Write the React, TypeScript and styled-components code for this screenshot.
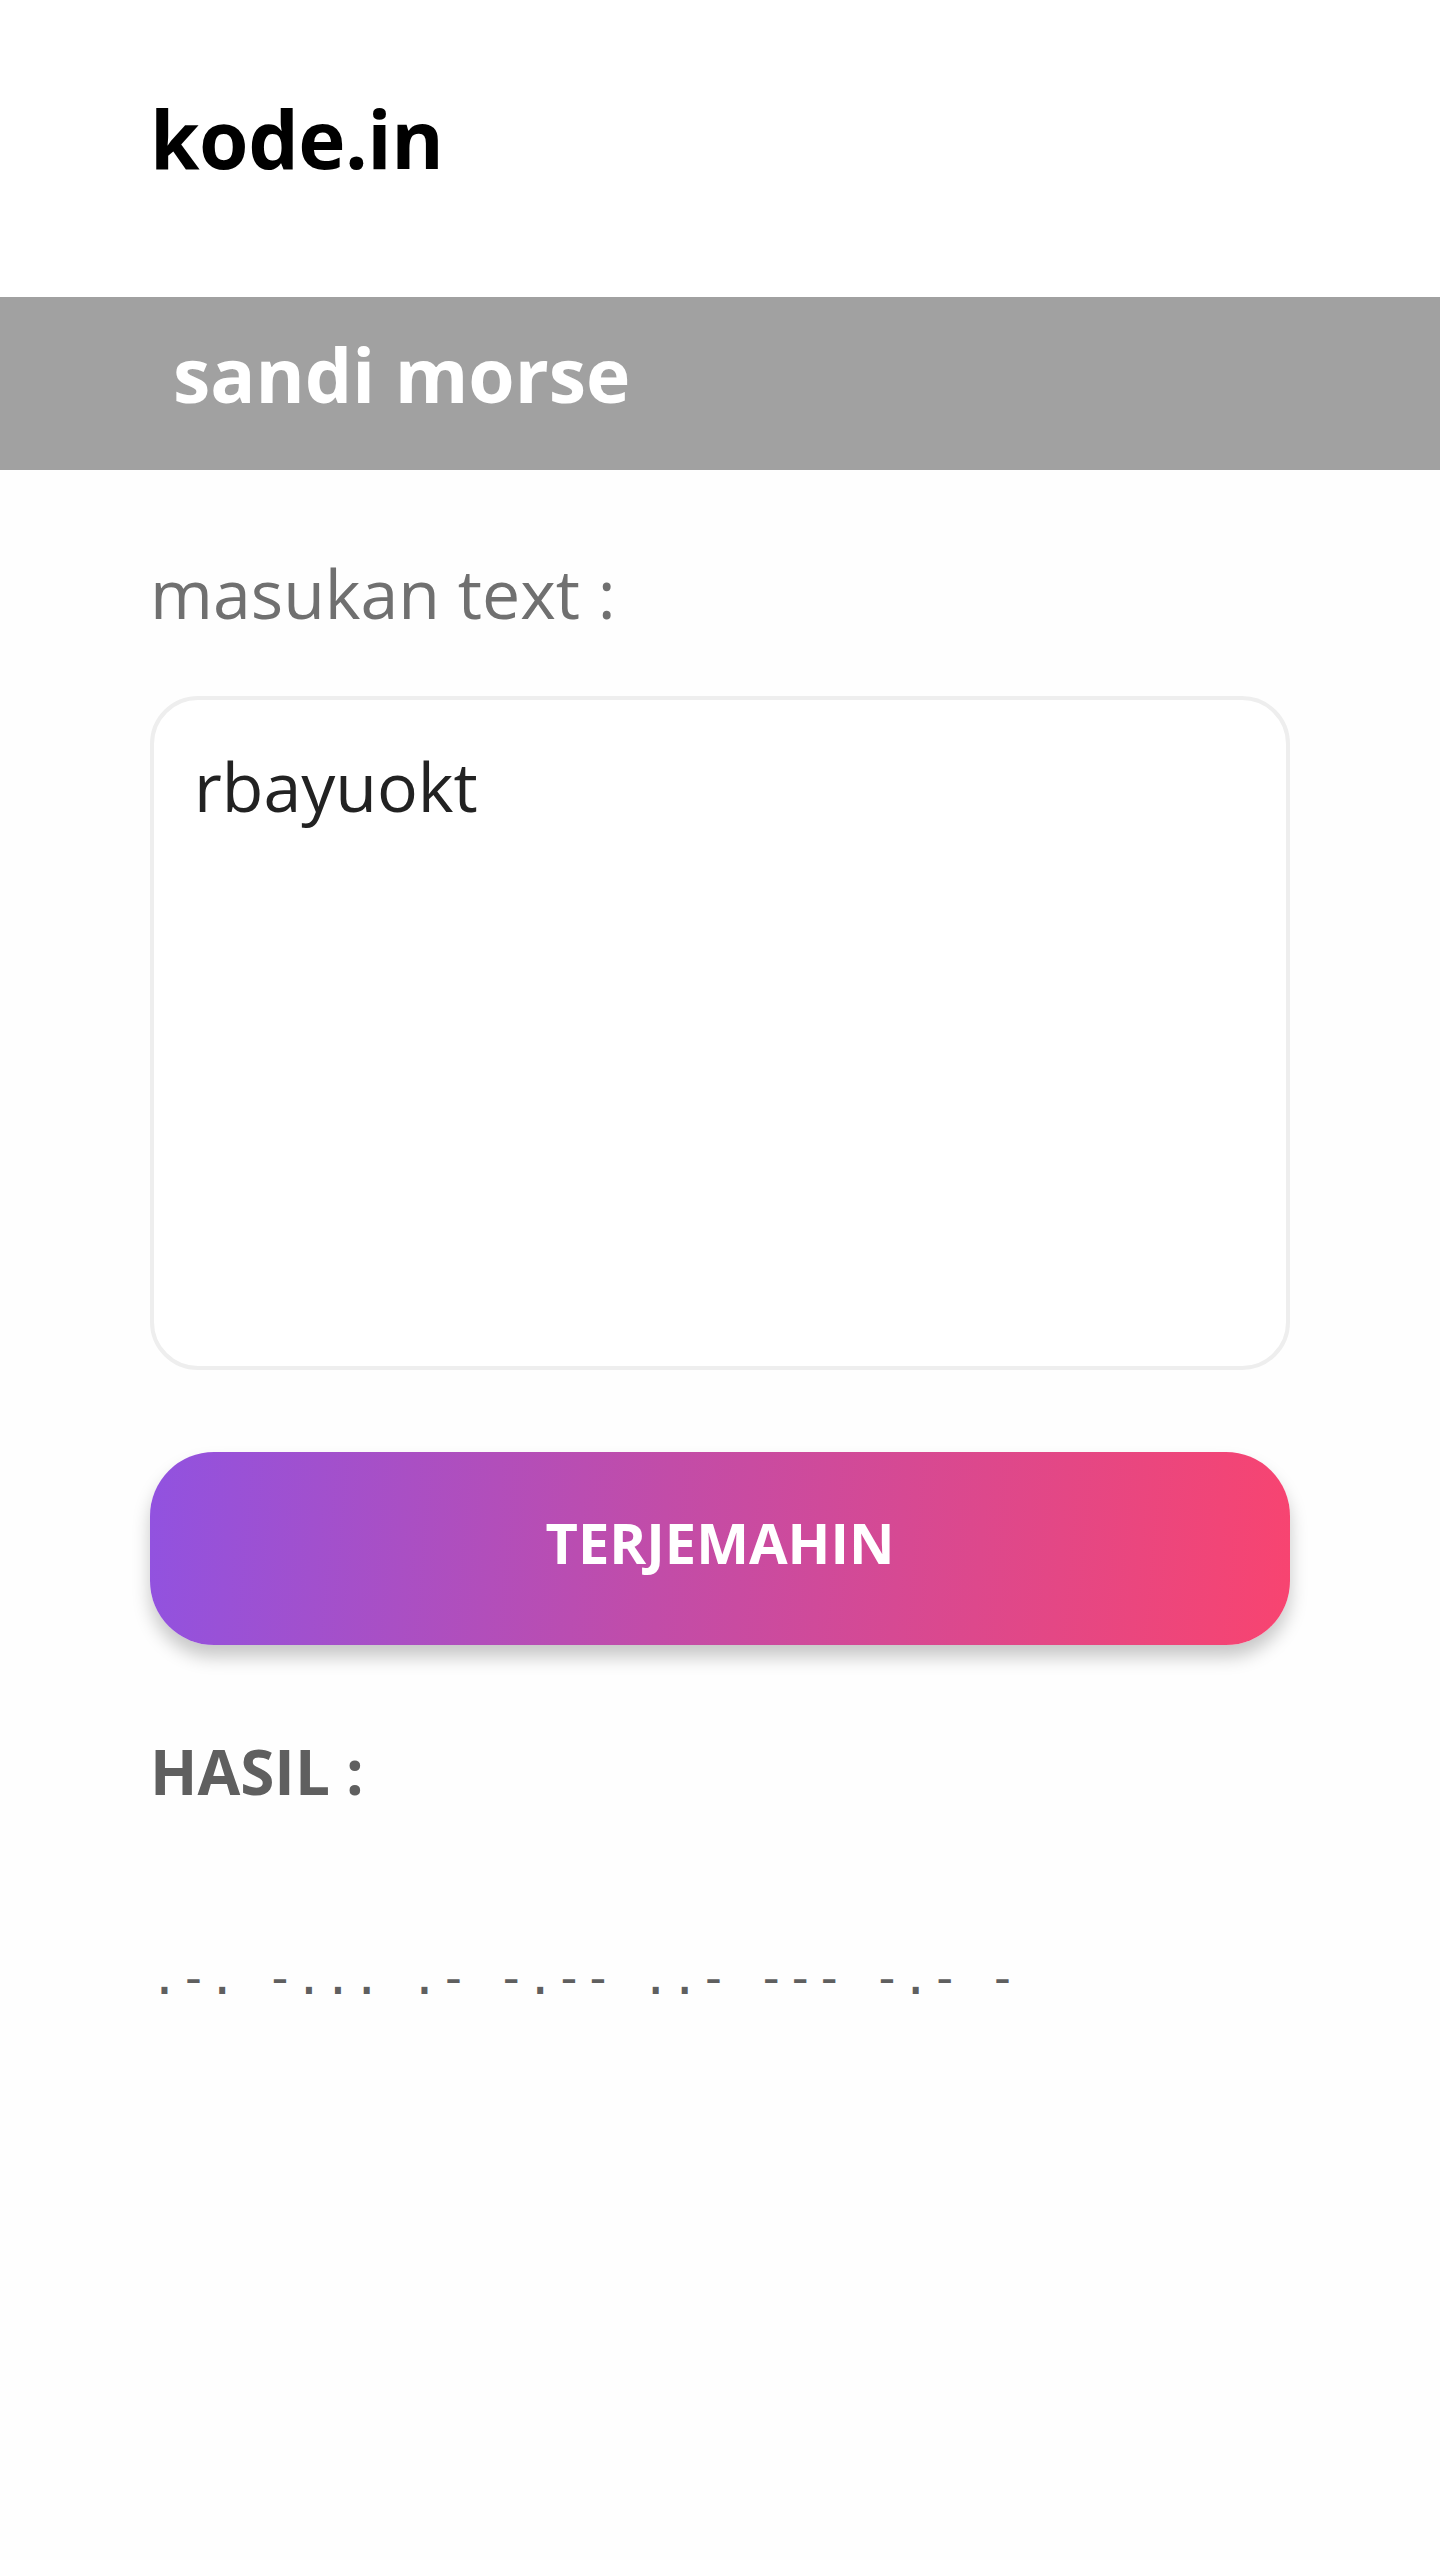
import { styled, createGlobalStyle } from "styled-components";

const GlobalStyle = createGlobalStyle`
  * {
    box-sizing: border-box;
  }
  body {
    margin: 0;
    background: #fefefe;
    font-family: 'Open Sans', 'Liberation Sans', sans-serif;
  }
`;

const Page = styled.div`
  display: flex;
  flex-direction: column;
  width: 100%;
  min-height: 2560px;
  background: #fefefe;
`;

const Header = styled.header`
  height: 297px;
  padding: 98px 150px 0;
  background: #ffffff;
`;

const Logo = styled.h1`
  margin: 0;
  font-size: 80px;
  line-height: 80px;
  font-weight: 700;
  color: #000000;
  letter-spacing: -0.5px;
`;

const Banner = styled.div`
  height: 173px;
  padding: 0 0 19px 173px;
  background: #a1a1a1;
  font-size: 75px;
  line-height: 154px;
  font-weight: 700;
  color: #ffffff;
`;

const Main = styled.main`
  display: flex;
  flex-direction: column;
  padding: 0 150px;
`;

const Label = styled.label`
  margin-top: 83px;
  font-size: 68px;
  line-height: 80px;
  font-weight: 400;
  color: #707070;
`;

const TextBox = styled.textarea`
  margin-top: 63px;
  width: 100%;
  height: 674px;
  padding: 38px 40px;
  border: 4px solid #eeeeee;
  border-radius: 48px;
  outline: 0;
  resize: none;
  background: #ffffff;
  font-family: 'Open Sans', 'Liberation Sans', sans-serif;
  font-size: 68px;
  line-height: 96px;
  color: #222222;
`;

const TranslateButton = styled.button`
  margin-top: 82px;
  width: 100%;
  height: 193px;
  padding: 0 0 14px;
  border: 0;
  border-radius: 64px;
  background: linear-gradient(95deg, #9152e0 0%, #c24ca8 45%, #f84470 100%);
  box-shadow: 0 12px 18px rgba(0, 0, 0, 0.22);
  font-family: 'Open Sans', 'Liberation Sans', sans-serif;
  font-size: 56px;
  font-weight: 700;
  color: #ffffff;
  text-transform: uppercase;
  cursor: pointer;
`;

const ResultTitle = styled.h2`
  margin: 86px 0 0;
  font-size: 62px;
  line-height: 80px;
  font-weight: 700;
  color: #5f5f5f;
`;

const MorseOutput = styled.p`
  margin: 134px 0 0;
  font-family: 'DejaVu Sans Mono', 'Liberation Mono', monospace;
  font-size: 48px;
  line-height: 64px;
  letter-spacing: 0;
  color: #5f5f5f;
  white-space: pre;
`;

const morse = ".-. -... .- -.-- ..- --- -.- -";

function App() {
  return (
    <Page>
      <GlobalStyle />
      <Header>
        <Logo>kode.in</Logo>
      </Header>
      <Banner>sandi morse</Banner>
      <Main>
        <Label htmlFor="teks">masukan text :</Label>
        <TextBox id="teks" defaultValue="rbayuokt" />
        <TranslateButton>Terjemahin</TranslateButton>
        <ResultTitle>HASIL :</ResultTitle>
        <MorseOutput>{morse}</MorseOutput>
      </Main>
    </Page>
  );
}

export default App;
